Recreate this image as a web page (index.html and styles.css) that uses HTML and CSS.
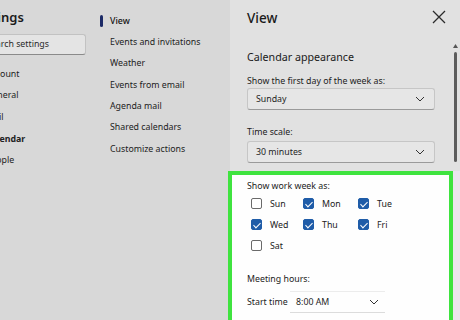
FILE: index.html
```html
<!DOCTYPE html>
<html lang="en">
<head>
<meta charset="utf-8">
<title>Settings - View</title>
<link rel="stylesheet" href="styles.css">
</head>
<body>
<div class="app">
  <aside class="nav1">
    <div class="nav1-inner">
      <h1 class="title">Settings</h1>
      <div class="search">Search settings</div>
      <ul class="nav1-list">
        <li><span class="ico"></span>Account</li>
        <li><span class="ico"></span>General</li>
        <li><span class="ico"></span>Mail</li>
        <li class="current"><span class="ico"></span>Calendar</li>
        <li><span class="ico"></span>People</li>
      </ul>
    </div>
  </aside>
  <nav class="nav2">
    <ul>
      <li class="active">View</li>
      <li>Events and invitations</li>
      <li>Weather</li>
      <li>Events from email</li>
      <li>Agenda mail</li>
      <li>Shared calendars</li>
      <li>Customize actions</li>
    </ul>
  </nav>
  <section class="panel">
    <header class="panel-head">
      <h2>View</h2>
      <svg class="close" width="14" height="14" viewBox="0 0 14 14"><path d="M1 1L13 13M13 1L1 13" stroke="#2b2b2b" stroke-width="1.3" fill="none"/></svg>
    </header>
    <div class="upper">
      <div class="content">
        <h3>Calendar appearance</h3>
        <div class="label">Show the first day of the week as:</div>
        <div class="select"><span>Sunday</span><svg width="10" height="6" viewBox="0 0 10 6"><path d="M1 1L5 5L9 1" stroke="#333" stroke-width="1" fill="none"/></svg></div>
        <div class="label label-gap">Time scale:</div>
        <div class="select"><span>30 minutes</span><svg width="10" height="6" viewBox="0 0 10 6"><path d="M1 1L5 5L9 1" stroke="#333" stroke-width="1" fill="none"/></svg></div>
      </div>
      <div class="scrollbar">
        <svg class="arrow" width="5" height="4" viewBox="0 0 5 4"><path d="M0 4L2.5 0L5 4Z" fill="#555"/></svg>
        <div class="thumb"></div>
      </div>
    </div>
    <div class="lower">
      <div class="hl">
        <div class="label">Show work week as:</div>
        <div class="days">
          <div class="day"><span class="cb"></span>Sun</div>
          <div class="day"><span class="cb on"></span>Mon</div>
          <div class="day"><span class="cb on"></span>Tue</div>
          <div class="day"><span class="cb on"></span>Wed</div>
          <div class="day"><span class="cb on"></span>Thu</div>
          <div class="day"><span class="cb on"></span>Fri</div>
          <div class="day"><span class="cb"></span>Sat</div>
        </div>
        <div class="label meet">Meeting hours:</div>
        <div class="time-row">
          <span class="time-label">Start time</span>
          <div class="tsel"><span>8:00 AM</span><svg width="10" height="6" viewBox="0 0 10 6"><path d="M1 1L5 5L9 1" stroke="#333" stroke-width="1" fill="none"/></svg></div>
        </div>
        <div class="time-row end">
          <span class="time-label">End time</span>
          <div class="tsel"><span>5:00 PM</span><svg width="10" height="6" viewBox="0 0 10 6"><path d="M1 1L5 5L9 1" stroke="#333" stroke-width="1" fill="none"/></svg></div>
        </div>
      </div>
      <div class="strip"></div>
    </div>
  </section>
</div>
</body>
</html>
```
FILE: styles.css
```css
* { box-sizing: border-box; margin: 0; padding: 0; }
html, body { width: 460px; height: 320px; overflow: hidden; }
body {
  font-family: "Noto Sans", "Open Sans", sans-serif;
  font-size: 8.8px;
  color: #1f1f1f;
  background: #d8d8d8;
}
ul { list-style: none; }
.app { display: flex; width: 460px; height: 320px; }

/* first column (clipped at the window edge) */
.nav1 { width: 90px; flex: none; overflow: hidden; background: #d8d8d8; }
.nav1-inner { margin-left: -44px; width: 140px; }
.title {
  font-size: 13px; font-weight: 600; line-height: 18px;
  padding: 8px 0 0 16px; height: 34px; color: #1a1a1a;
}
.search {
  margin-left: 20px; width: 110px; height: 21px;
  padding-left: 9px; line-height: 19px;
  background: #e4e4e4; border: 1px solid #c2c2c2; border-bottom-color: #8a8a8a;
  border-radius: 3px; color: #2a2a2a;
}
.nav1-list { margin-top: 8px; }
.nav1-list li {
  display: flex; align-items: center; gap: 6px;
  height: 21.6px; padding-left: 14px; color: #222;
}
.nav1-list li.current { font-weight: 700; }
.ico { width: 10px; height: 10px; border: 1px solid #555; border-radius: 2px; }

/* second column */
.nav2 { width: 140px; flex: none; background: #d8d8d8; padding-top: 10.5px; }
.nav2 li { position: relative; height: 21.4px; line-height: 21.4px; padding-left: 20px; color: #222; }
.nav2 li.active { font-weight: 500; color: #111; }
.nav2 li.active::before {
  content: ""; position: absolute; left: 10px; top: 4.5px;
  width: 2.5px; height: 12px; border-radius: 2px; background: #1c2a66;
}

/* panel */
.panel { flex: 1; display: flex; flex-direction: column; background: #e1e1e1; min-width: 0; }
.panel-head {
  height: 37px; flex: none; display: flex; align-items: center; justify-content: space-between;
  padding: 0 14px 0 17px;
}
.panel-head h2 { font-size: 13.5px; font-weight: 500; color: #1a1a1a; margin-top: -1px; }
.close { margin-top: -3px; }

.upper { display: flex; flex: none; height: 134px; }
.content { flex: 1; padding: 13px 0 0 17px; }
.content h3 { font-size: 10.7px; font-weight: 400; line-height: 14px; color: #1a1a1a; }
.label { line-height: 12px; color: #222; }
.content .label { margin-top: 11px; }
.content .label-gap { margin-top: 16px; }
.select {
  margin-top: 1px; width: 188px; height: 22px;
  display: flex; align-items: center; justify-content: space-between;
  padding: 0 9px 0 8px;
  background: #e6e6e6; border: 1px solid #c6c6c6; border-bottom-color: #9a9a9a; border-radius: 3px;
}
.content .label-gap + .select { margin-top: 3px; }

.scrollbar { width: 9px; flex: none; display: flex; flex-direction: column; align-items: center; padding-top: 7px; }
.arrow { display: block; }
.thumb { margin-top: 4px; width: 3px; height: 110px; border-radius: 2px; background: #5c5c5c; }

.lower { flex: 1; display: flex; min-height: 0; }
.hl {
  margin-left: -2px; width: 225px; flex: none;
  border: 4px solid #3fe33f; border-bottom: none;
  background: #fefefe; padding: 5px 0 0 15px;
}
.strip { flex: 1; background: #ece5ee; }

.days {
  display: grid; grid-template-columns: 52px 55px auto;
  margin-left: 4px; margin-top: 1px;
}
.day { display: flex; align-items: center; gap: 8px; height: 21px; color: #222; }
.cb {
  width: 11px; height: 11px; border: 1px solid #6a6a6a; border-radius: 2px; background: #fff;
  position: relative;
}
.cb.on { background: #1f5ca8; border-color: #1f5ca8; }
.cb.on::after {
  content: ""; position: absolute; left: 3px; top: 1px;
  width: 3px; height: 6px; border: solid #fff; border-width: 0 1.3px 1.3px 0;
  transform: rotate(45deg);
}
.meet { margin-top: 17px; }
.time-row { display: flex; align-items: center; margin-top: 6px; height: 22px; }
.time-row.end { margin-top: 8px; }
.time-label { width: 43px; color: #222; }
.tsel {
  width: 95px; height: 22px; display: flex; align-items: center; justify-content: space-between;
  padding: 0 6px 0 6px; border-top: 1px solid #ececec; border-bottom: 1px solid #dcdcdc;
}
```
